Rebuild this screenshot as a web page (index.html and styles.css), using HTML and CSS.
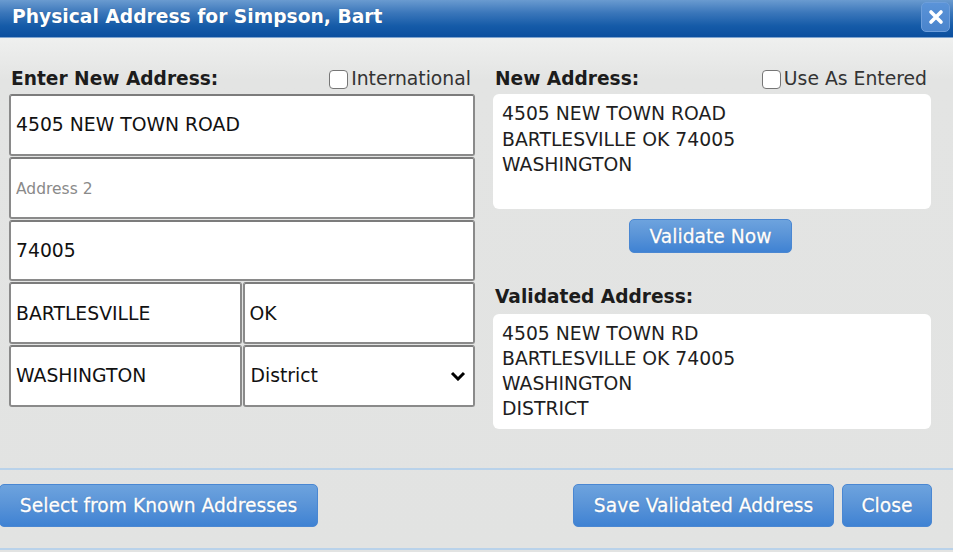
FILE: index.html
```html
<!DOCTYPE html>
<html>
<head>
<meta charset="utf-8">
<link rel="stylesheet" href="styles.css">
</head>
<body>
<div class="dialog">
  <div class="titlebar">
    <span class="title">Physical Address for Simpson, Bart</span>
    <button class="close-x" aria-label="Close">
      <svg width="16" height="16" viewBox="0 0 16 16"><path d="M3 3 L13 13 M13 3 L3 13" stroke="#fff" stroke-width="3.6" stroke-linecap="round"/></svg>
    </button>
  </div>
  <div class="content">
    <div class="col-left">
      <div class="head">
        <span class="label">Enter New Address:</span>
        <label class="check"><input type="checkbox"><span>International</span></label>
      </div>
      <div class="fields">
        <input class="field full" type="text" value="4505 NEW TOWN ROAD">
        <input class="field full" type="text" placeholder="Address 2">
        <input class="field full" type="text" value="74005">
        <div class="pair">
          <input class="field" type="text" value="BARTLESVILLE">
          <input class="field" type="text" value="OK">
        </div>
        <div class="pair">
          <input class="field" type="text" value="WASHINGTON">
          <select class="field select"><option>District</option></select>
        </div>
      </div>
    </div>
    <div class="col-right">
      <div class="head">
        <span class="label">New Address:</span>
        <label class="check"><input type="checkbox"><span>Use As Entered</span></label>
      </div>
      <div class="addr-box">4505 NEW TOWN ROAD<br>BARTLESVILLE OK 74005<br>WASHINGTON</div>
      <div class="center"><button class="btn validate">Validate Now</button></div>
      <div class="head validated-head"><span class="label">Validated Address:</span></div>
      <div class="addr-box validated">4505 NEW TOWN RD<br>BARTLESVILLE OK 74005<br>WASHINGTON<br>DISTRICT</div>
    </div>
  </div>
  <div class="footer">
    <button class="btn big known">Select from Known Addresses</button>
    <div class="right-btns">
      <button class="btn big save">Save Validated Address</button>
      <button class="btn big close">Close</button>
    </div>
  </div>
</div>
</body>
</html>
```

FILE: styles.css
```css
* { box-sizing: border-box; }
html, body { margin: 0; padding: 0; }
body {
  font-family: "DejaVu Sans", Verdana, sans-serif;
  font-size: 18.8px;
  color: #1e1e1e;
  background: #e2e3e2;
}
.dialog {
  width: 953px;
  height: 552px;
  display: flex;
  flex-direction: column;
  background: linear-gradient(to bottom, #f5f6f5 0px, #f1f2f1 30px, #e3e4e3 80px, #e2e3e2 100%);
  overflow: hidden;
}
.titlebar {
  height: 38px;
  flex: none;
  display: flex;
  align-items: flex-start;
  justify-content: space-between;
  background: linear-gradient(to bottom, #6a9bd0 0%, #3a76ba 35%, #155ba8 70%, #0b4f9f 100%);
  border-bottom: 1px solid #7ea4cf;
  padding-left: 12px;
  padding-right: 3px;
}
.title {
  color: #fff;
  font-weight: bold;
  font-size: 18.7px;
  line-height: 33px;
  text-shadow: 0 0 1px rgba(0,0,0,0.3);
}
.close-x {
  margin-top: 2px;
  width: 29px;
  height: 30px;
  border: 1px solid #6d9edb;
  border-radius: 5px;
  background: linear-gradient(to bottom, #5a93d8, #4a84cc);
  display: flex;
  align-items: center;
  justify-content: center;
  padding: 0;
}
.content {
  flex: 1;
  display: flex;
  gap: 18px;
  padding: 28px 0 0 9px;
}
.col-left { width: 466px; }
.col-right { width: 438px; }
.head {
  height: 26px;
  margin-bottom: 2px;
  display: flex;
  align-items: center;
  justify-content: space-between;
  padding: 0 4px 0 2px;
  line-height: 26px;
}
.label { font-weight: bold; color: #1c1c1c; font-size: 18.6px; }
.check {
  display: flex;
  align-items: center;
  color: #333;
}
.check input {
  appearance: none;
  -webkit-appearance: none;
  width: 19px;
  height: 19px;
  margin: 0 3px 0 0;
  border: 1.5px solid #767676;
  border-radius: 4px;
  background: #fff;
}
.fields {
  display: flex;
  flex-direction: column;
  gap: 1px;
}
.pair {
  display: flex;
  gap: 1px;
}
.pair .field { width: 50%; }
.field {
  height: 61.75px;
  width: 100%;
  border: 2px solid #8a8a8a;
  border-top-color: #7c7c7c;
  border-radius: 3px;
  background: #fff;
  font-family: "DejaVu Sans", Verdana, sans-serif;
  font-size: 18.8px;
  color: #111;
  padding: 0 5px;
  margin: 0;
  outline: none;
}
.field::placeholder {
  font-size: 15.5px;
  color: #8a8a8a;
}
.select {
  appearance: none;
  -webkit-appearance: none;
  background: #fff url("data:image/svg+xml;utf8,<svg xmlns='http://www.w3.org/2000/svg' width='16' height='10' viewBox='0 0 16 10'><path d='M2 2 L8 8 L14 2' fill='none' stroke='black' stroke-width='3' stroke-linejoin='miter'/></svg>") no-repeat right 7px center;
  padding-left: 6px;
}
.addr-box {
  background: #fff;
  border-radius: 6px;
  height: 115px;
  padding: 7px 9px;
  line-height: 25.5px;
  color: #1e1e1e;
}
.validated {
  margin-top: 4px;
  height: 115px;
  line-height: 25px;
}
.center {
  display: flex;
  justify-content: center;
  margin-top: 10px;
  padding-right: 3px;
}
.validated-head { margin-top: 31px; margin-bottom: 0; }
.btn {
  font-family: "DejaVu Sans", Verdana, sans-serif;
  font-size: 18.7px;
  color: #fff;
  border: 1px solid #4a87d2;
  border-radius: 5px;
  background: linear-gradient(to bottom, #6da3de 0%, #5b95d8 45%, #3f82d3 100%);
  text-shadow: 0 0 1px rgba(10,40,90,0.7);
  -webkit-text-stroke: 0.35px #fff;
  padding: 0;
  cursor: pointer;
}
.validate {
  width: 163px;
  height: 34px;
}
.footer {
  flex: none;
  height: 82px;
  margin-bottom: 2px;
  border-top: 2px solid #b9d2ea;
  border-bottom: 2px solid #b9d2ea;
  display: flex;
  justify-content: space-between;
  align-items: flex-start;
  padding: 14px 21px 0 0;
}
.big { height: 43px; }
.known { width: 319px; margin-left: -1px; }
.right-btns { display: flex; gap: 8px; }
.save { width: 261px; }
.close { width: 90px; }
```
